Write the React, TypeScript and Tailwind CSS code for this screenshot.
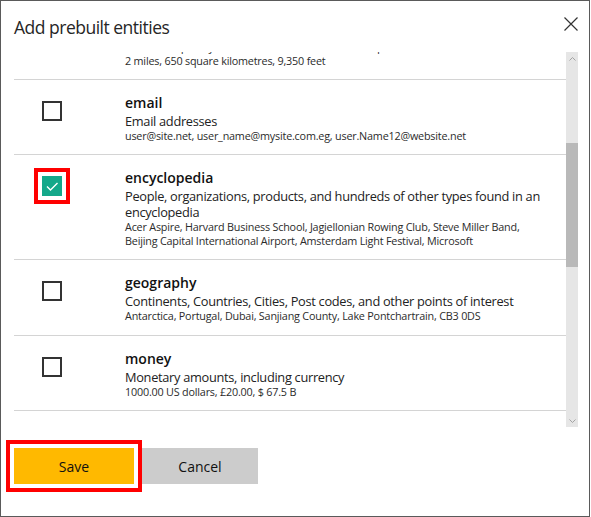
import React from "react";

type Entity = {
  name: string;
  desc: React.ReactNode;
  examples: React.ReactNode;
  checked?: boolean;
  pb?: string;
};

const entities: Entity[] = [
  {
    name: "email",
    desc: "Email addresses",
    examples: "user@site.net, user_name@mysite.com.eg, user.Name12@website.net",
  },
  {
    name: "encyclopedia",
    desc: (
      <>
        People, organizations, products, and hundreds of other types found in an
        <br />
        encyclopedia
      </>
    ),
    examples: (
      <>
        Acer Aspire, Harvard Business School, Jagiellonian Rowing Club, Steve Miller Band,
        <br />
        Beijing Capital International Airport, Amsterdam Light Festival, Microsoft
      </>
    ),
    checked: true,
  },
  {
    name: "geography",
    desc: "Continents, Countries, Cities, Post codes, and other points of interest",
    examples: "Antarctica, Portugal, Dubai, Sanjiang County, Lake Pontchartrain, CB3 0DS",
    pb: "pb-[12px]",
  },
  {
    name: "money",
    desc: "Monetary amounts, including currency",
    examples: "1000.00 US dollars, £20.00, $ 67.5 B",
  },
];

function Checkbox({ checked }: { checked?: boolean }) {
  if (checked) {
    return (
      <div className="w-5 h-5 bg-[#14a88a] flex items-center justify-center outline-solid outline-4 outline-[#ff0000] outline-offset-4">
        <svg width="20" height="20" viewBox="0 0 20 20">
          <path d="M5 10.5 L8.5 14 L15.5 7" fill="none" stroke="#ffffff" strokeWidth="1.4" />
        </svg>
      </div>
    );
  }
  return <div className="w-5 h-5 border-2 border-[#333333] bg-white" />;
}

function Row({ e }: { e: Entity }) {
  return (
    <div className={`flex border-b border-[#d4d4d4] pt-[13px] ${e.pb ?? "pb-[11px]"}`}>
      <div className="w-[111px] shrink-0 pl-[28px] pt-[8px]">
        <Checkbox checked={e.checked} />
      </div>
      <div className="flex-1 pr-[16px] whitespace-nowrap">
        <div className="text-[14px] font-semibold leading-[20px] text-[#111]">{e.name}</div>
        <div className="text-[12.8px] tracking-[-0.3px] leading-[16px] text-[#222]">{e.desc}</div>
        <div className="text-[10.8px] tracking-[-0.2px] leading-[14px] text-[#2b2b2b]">{e.examples}</div>
      </div>
    </div>
  );
}

export default function App() {
  return (
    <div className="w-[590px] h-[517px] border border-[#5a5a5a] bg-white flex flex-col font-['Open_Sans',sans-serif] text-[#222]">
      <div className="h-[51px] shrink-0 flex justify-between items-start pl-[13px] pr-[11px]">
        <h1 className="mt-[13px] text-[17.5px] tracking-[-0.5px] leading-[26px] font-normal text-[#262626]">
          Add prebuilt entities
        </h1>
        <svg className="mt-[16px]" width="14" height="14" viewBox="0 0 14 14">
          <path d="M0.5 0.5 L13.5 13.5 M13.5 0.5 L0.5 13.5" stroke="#333" strokeWidth="1.2" fill="none" />
        </svg>
      </div>

      <div className="h-[375px] shrink-0 flex pl-[13px] pr-[11px]">
        <div className="flex-1 overflow-hidden">
          <div className="-mt-[61px]">
            <div className="flex border-b border-[#d4d4d4] pt-[13px] pb-[11px]">
              <div className="w-[111px] shrink-0 pl-[28px] pt-[8px]">
                <Checkbox />
              </div>
              <div className="flex-1 pr-[16px] whitespace-nowrap">
                <div className="text-[14px] font-semibold leading-[20px] text-[#111]">dimension</div>
                <div className="text-[12.8px] tracking-[-0.3px] leading-[16px] text-[#222]">
                  Spatial dimensions, including length, distance, area, and volume
                </div>
                <div className="text-[10.8px] tracking-[-0.2px] leading-[14px] text-[#2b2b2b]">
                  3 feet, 25 square yards, 6 cubic metres, 1.5 km, 40 sq m, 2 inches,
                  <br />
                  2 miles, 650 square kilometres, 9,350 feet
                </div>
              </div>
            </div>
            {entities.map((e) => (
              <Row key={e.name} e={e} />
            ))}
          </div>
        </div>
        <div className="w-[12px] bg-[#e6e6e6] flex flex-col items-center">
          <div className="h-[16px] w-full flex justify-center">
            <svg className="mt-[5px]" width="7" height="4" viewBox="0 0 7 4">
              <path d="M0.5 3.5 L3.5 0.5 L6.5 3.5" fill="none" stroke="#a3a3a3" strokeWidth="1" />
            </svg>
          </div>
          <div className="h-[75px]" />
          <div className="h-[124px] w-full bg-[#b9b9b9]" />
          <div className="flex-1" />
          <div className="h-[16px] w-full flex justify-center">
            <svg className="mt-[8px]" width="7" height="4" viewBox="0 0 7 4">
              <path d="M0.5 0.5 L3.5 3.5 L6.5 0.5" fill="none" stroke="#a3a3a3" strokeWidth="1" />
            </svg>
          </div>
        </div>
      </div>

      <div className="flex-1 flex items-start pl-[13px] pt-[21px]">
        <button className="w-[120px] h-[36px] bg-[#ffb900] text-[14px] text-[#111] outline-solid outline-4 outline-[#ff0000] outline-offset-4">
          Save
        </button>
        <button className="ml-2 w-[116px] h-[36px] bg-[#cccccc] text-[14px] text-[#111]">
          Cancel
        </button>
      </div>
    </div>
  );
}
